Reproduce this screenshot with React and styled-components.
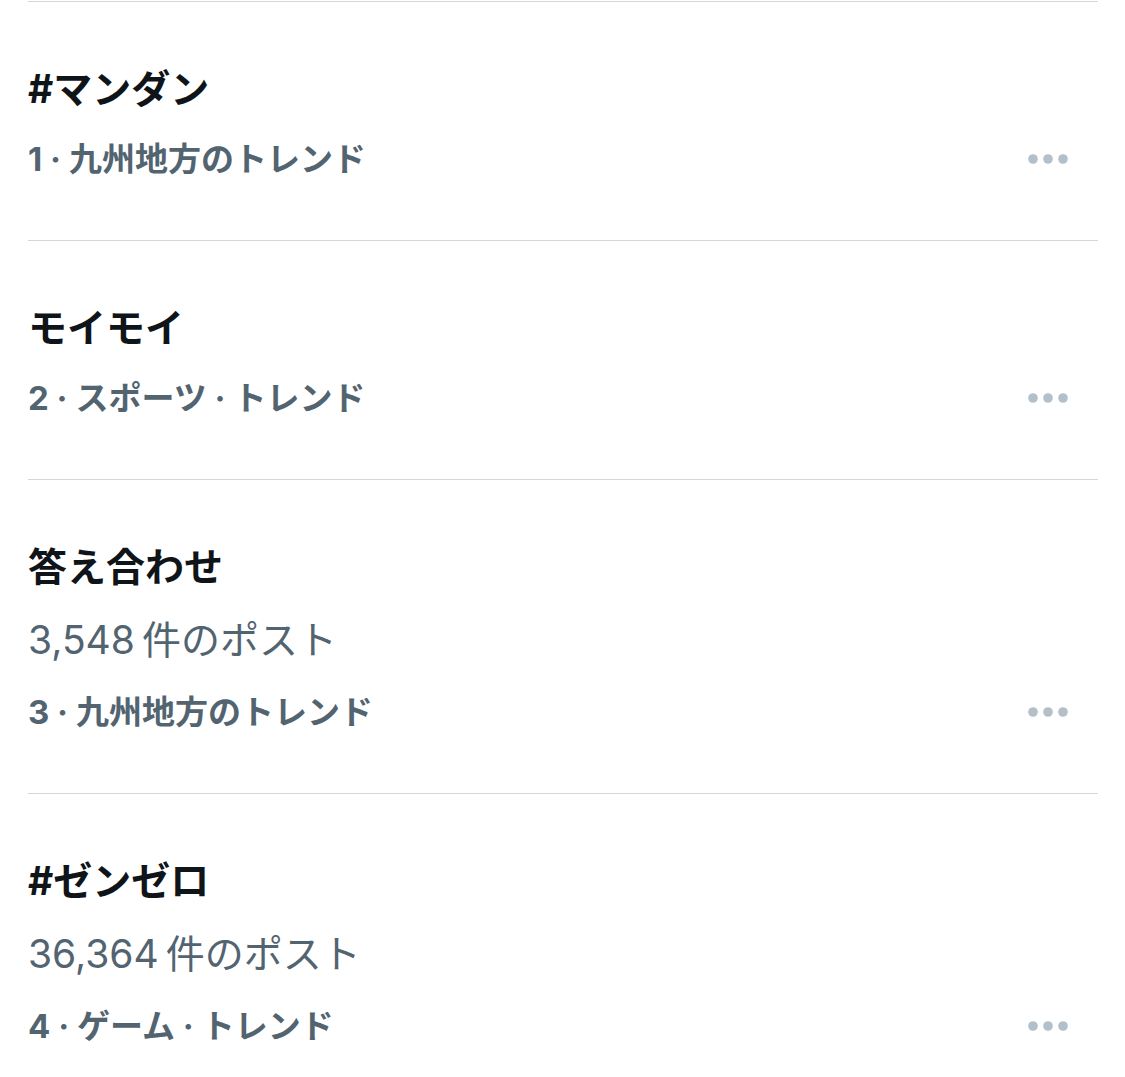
import React from "react";
import styled, { createGlobalStyle } from "styled-components";

const GlobalStyle = createGlobalStyle`
  body {
    margin: 0;
    background: #ffffff;
    font-family: Inter, "Noto Sans CJK JP", sans-serif;
  }
`;

const List = styled.div`
  margin: 1px 27px 0 28px;
  border-top: 1px solid #cfd9de;
`;

const Row = styled.div`
  display: flex;
  align-items: flex-end;
  padding: 52px 0 46px;
  border-bottom: 1px solid #cfd9de;
`;

const Body = styled.div`
  flex: 1;
  display: flex;
  flex-direction: column;
`;

const Title = styled.div`
  height: 70px;
  line-height: 70px;
  font-size: 39px;
  font-weight: 700;
  color: #0f1419;
`;

const Count = styled.div`
  height: 75px;
  line-height: 75px;
  font-size: 39px;
  font-weight: 400;
  color: #536471;
`;

const Meta = styled.div`
  height: 70px;
  line-height: 70px;
  font-size: 33px;
  font-weight: 700;
  color: #536471;
`;

const More = styled.div`
  height: 70px;
  display: flex;
  align-items: center;
  padding-right: 27px;
`;

const MoreIcon = () => (
  <svg width="44" height="12" viewBox="0 0 44 12">
    <circle cx="6" cy="6" r="4.8" fill="#b3c0c9" />
    <circle cx="21" cy="6" r="4.8" fill="#b3c0c9" />
    <circle cx="36" cy="6" r="4.8" fill="#b3c0c9" />
  </svg>
);

const trends = [
  { title: "#マンダン", meta: "1 · 九州地方のトレンド" },
  { title: "モイモイ", meta: "2 · スポーツ · トレンド" },
  { title: "答え合わせ", count: "3,548\u2009件のポスト", meta: "3 · 九州地方のトレンド" },
  { title: "#ゼンゼロ", count: "36,364\u2009件のポスト", meta: "4 · ゲーム · トレンド" },
];

export default function App() {
  return (
    <>
      <GlobalStyle />
      <List>
        {trends.map((t) => (
          <Row key={t.title}>
            <Body>
              <Title>{t.title}</Title>
              {t.count && <Count>{t.count}</Count>}
              <Meta>{t.meta}</Meta>
            </Body>
            <More>
              <MoreIcon />
            </More>
          </Row>
        ))}
      </List>
    </>
  );
}
